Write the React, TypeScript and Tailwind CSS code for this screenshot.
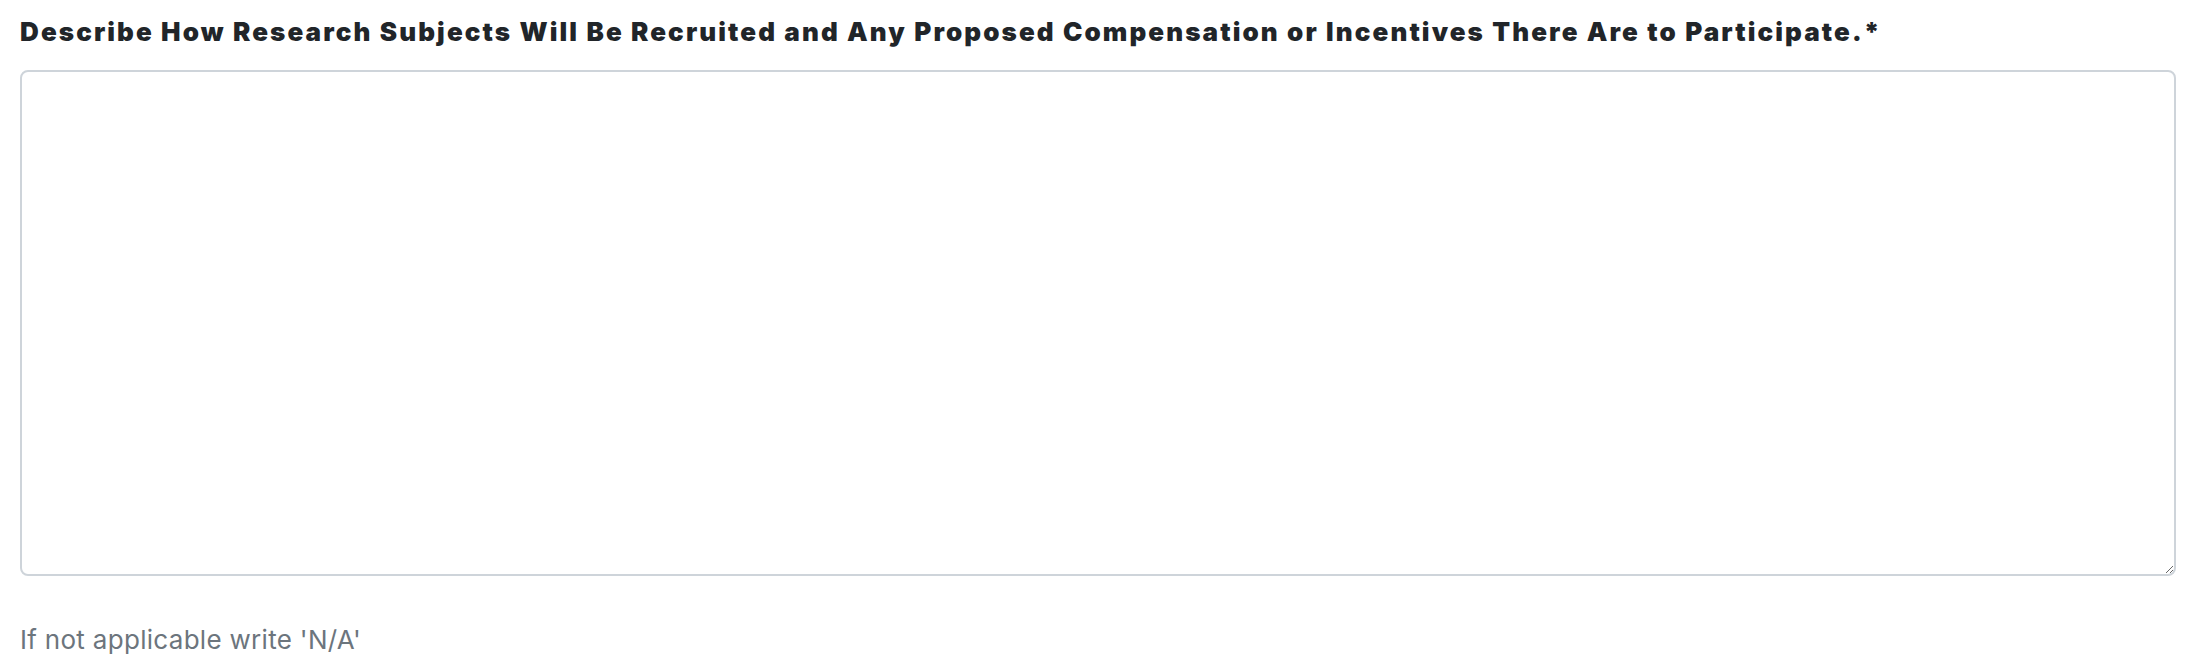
import React from "react";

export default function App() {
  return (
    <div className="w-[2204px] h-[670px] bg-white pl-[20px] pr-[28px] pt-[16px] overflow-hidden" style={{ fontFamily: "Inter, 'Noto Sans', sans-serif" }}>
      <label className="block text-[26px] leading-[32px] font-black text-[#212529] tracking-[2.1px] whitespace-nowrap">
        Describe How Research Subjects Will Be Recruited and Any Proposed Compensation or Incentives There Are to Participate.*
      </label>
      <textarea className="block mt-[22px] w-[2156px] h-[506px] border-2 border-[#ced4da] rounded-[8px] bg-white outline-none" />
      <div className="mt-[48px] text-[26px] leading-[32px] tracking-[0.3px] text-[#6c757d]">If not applicable write 'N/A'</div>
    </div>
  );
}
